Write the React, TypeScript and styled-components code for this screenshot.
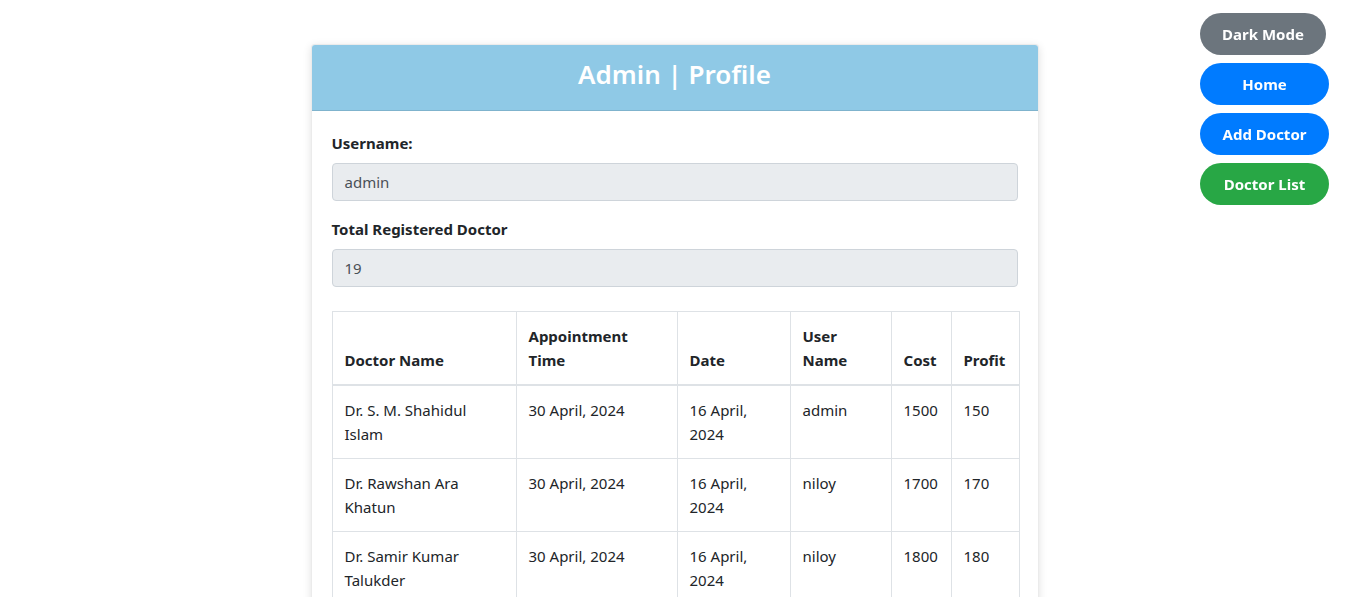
import React from "react";
import styled, { createGlobalStyle } from "styled-components";

const Global = createGlobalStyle`
  html, body { margin: 0; padding: 0; background: #fff; }
  body {
    font-family: "Noto Sans", "Open Sans", sans-serif;
    color: #212529;
    font-size: 16px;
    line-height: 1.5;
  }
  * { box-sizing: border-box; }
`;

const Page = styled.div`
  display: flex;
  justify-content: center;
  padding-top: 44px;
  padding-left: 4px;
`;

const Card = styled.div`
  width: 728px;
  background: #fff;
  border: 1px solid rgba(0, 0, 0, 0.08);
  border-radius: 4px;
  box-shadow: 0 2px 8px rgba(0, 0, 0, 0.12);
  overflow: hidden;
`;

const CardHeader = styled.div`
  background: #8fc9e6;
  border-bottom: 1px solid #7fb3cd;
  padding: 13px 20px 19px;
  text-align: center;
`;

const Title = styled.h2`
  margin: 0;
  color: #fff;
  font-size: 26px;
  font-weight: 600;
  line-height: 33px;
`;

const CardBody = styled.div`
  padding: 20px 20px 0;
`;

const FormGroup = styled.div`
  margin-bottom: 16px;
`;

const Label = styled.label`
  display: block;
  font-weight: 700;
  font-size: 15px;
  line-height: 24px;
  margin-bottom: 8px;
`;

const Field = styled.div`
  height: 38px;
  padding: 6px 12px;
  background: #e9ecef;
  border: 1px solid #ced4da;
  border-radius: 4px;
  color: #495057;
  font-size: 15px;
  line-height: 24px;
`;

const Table = styled.table`
  width: 100%;
  margin-top: 24px;
  border-collapse: collapse;
  table-layout: fixed;
  font-size: 15px;
`;

const Th = styled.th<{ $w: number }>`
  width: ${(p) => p.$w}px;
  border: 1px solid #dee2e6;
  border-bottom: 2px solid #dee2e6;
  padding: 12px;
  text-align: left;
  vertical-align: bottom;
  font-weight: 700;
  line-height: 24px;
`;

const Td = styled.td`
  border: 1px solid #dee2e6;
  padding: 12px;
  vertical-align: top;
  line-height: 24px;
`;

const Nav = styled.div`
  position: fixed;
  top: 13px;
  left: 1200px;
  display: flex;
  flex-direction: column;
  gap: 8px;
`;

const NavButton = styled.button<{ $bg: string; $w: number }>`
  width: ${(p) => p.$w}px;
  height: 42px;
  border: none;
  border-radius: 21px;
  background: ${(p) => p.$bg};
  color: #fff;
  font-family: "Noto Sans", sans-serif;
  font-weight: 700;
  font-size: 15px;
  cursor: pointer;
  padding: 0;
`;

const rows = [
  ["Dr. S. M. Shahidul Islam", "30 April, 2024", "16 April, 2024", "admin", "1500", "150"],
  ["Dr. Rawshan Ara Khatun", "30 April, 2024", "16 April, 2024", "niloy", "1700", "170"],
  ["Dr. Samir Kumar Talukder", "30 April, 2024", "16 April, 2024", "niloy", "1800", "180"],
  ["Dr. Mohammad Abdul Karim", "30 April, 2024", "16 April, 2024", "niloy", "1600", "160"],
];

const cols: [string, number][] = [
  ["Doctor Name", 184],
  ["Appointment Time", 161],
  ["Date", 113],
  ["User Name", 101],
  ["Cost", 60],
  ["Profit", 68],
];

export default function App() {
  return (
    <>
      <Global />
      <Nav>
        <NavButton $bg="#6c757d" $w={126}>Dark Mode</NavButton>
        <NavButton $bg="#007bff" $w={129}>Home</NavButton>
        <NavButton $bg="#007bff" $w={129}>Add Doctor</NavButton>
        <NavButton $bg="#28a745" $w={129}>Doctor List</NavButton>
      </Nav>
      <Page>
        <Card>
          <CardHeader>
            <Title>Admin | Profile</Title>
          </CardHeader>
          <CardBody>
            <FormGroup>
              <Label>Username:</Label>
              <Field>admin</Field>
            </FormGroup>
            <FormGroup>
              <Label>Total Registered Doctor</Label>
              <Field>19</Field>
            </FormGroup>
            <Table>
              <thead>
                <tr>
                  {cols.map(([c, w]) => (
                    <Th key={c} $w={w}>{c}</Th>
                  ))}
                </tr>
              </thead>
              <tbody>
                {rows.map((r, i) => (
                  <tr key={i}>
                    {r.map((c, j) => (
                      <Td key={j}>{c}</Td>
                    ))}
                  </tr>
                ))}
              </tbody>
            </Table>
          </CardBody>
        </Card>
      </Page>
    </>
  );
}
